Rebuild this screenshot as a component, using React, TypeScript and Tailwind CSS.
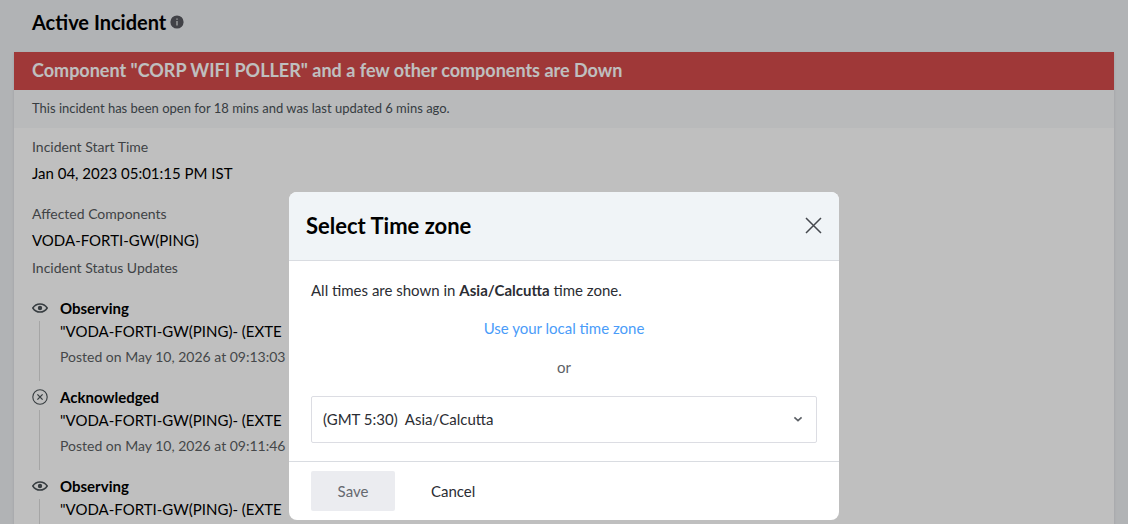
import React from "react";

type Update = { kind: "observing" | "acknowledged"; title: string; time: string };

const updates: Update[] = [
  { kind: "observing", title: "Observing", time: "09:13:03" },
  { kind: "acknowledged", title: "Acknowledged", time: "09:11:46" },
  { kind: "observing", title: "Observing", time: "09:10:02" },
];

function InfoIcon() {
  return (
    <svg viewBox="0 0 14 14" className="size-[14px]" aria-hidden="true">
      <circle cx="7" cy="7" r="6.6" fill="#57595f" />
      <path d="M6.200 3.400h1.600v1.400H6.200zM6.200 6h1.600v4.600H6.200z" fill="#c4c6c8" />
    </svg>
  );
}

function EyeIcon() {
  return (
    <svg viewBox="0 0 16 16" className="size-4" fill="none" aria-hidden="true">
      <path d="M.8 8C2.600 5.200 5 3.900 8 3.900S13.400 5.200 15.200 8C13.400 10.800 11 12.100 8 12.100S2.600 10.800.8 8Z" stroke="#4a5257" strokeWidth="1.500" />
      <circle cx="8" cy="8" r="2.200" fill="#4a5257" />
    </svg>
  );
}

function CircleCrossIcon() {
  return (
    <svg viewBox="0 0 16 16" className="size-4" fill="none" stroke="#4a5257" aria-hidden="true">
      <circle cx="8" cy="8" r="7.2" strokeWidth="1.100" />
      <path d="m5.400 5.400 5.200 5.200m0-5.200-5.200 5.200" strokeWidth="1.300" />
    </svg>
  );
}

function UpdateItem({ update }: { update: Update }) {
  return (
    <li className="flex gap-3">
      <div className="flex w-4 flex-col items-start pt-1">
        {update.kind === "observing" ? <EyeIcon /> : <CircleCrossIcon />}
        <div className="mt-[5px] mb-1 ml-[7px] w-px flex-1 bg-[#dcdcdc]" />
      </div>
      <div className="pb-[18px] text-black">
        <h3 className="text-[15px] leading-6 font-bold">{update.title}</h3>
        <p className="text-[15px] leading-[22px]">"VODA-FORTI-GW(PING)- (EXTE</p>
        <p className="mt-[5px] text-sm leading-5 text-[#5c5f63]">Posted on May 10, 2026 at {update.time}</p>
      </div>
    </li>
  );
}

function TimeZoneDialog() {
  return (
    <div className="fixed inset-0 flex items-start justify-center bg-black/25 pt-48">
      <div role="dialog" aria-modal="true" aria-labelledby="tz-title" className="w-full max-w-[550px] overflow-hidden rounded-lg bg-white text-[#2b2d33]">
        <header className="flex items-center justify-between border-b border-[#d9dce1] bg-[#f0f4f7] px-[17px] py-4">
          <h2 id="tz-title" className="text-[22px] leading-9 font-bold text-black">Select Time zone</h2>
          <button type="button" aria-label="Close" className="pb-[2px]">
            <svg viewBox="0 0 17 17" className="size-[17px]" stroke="#45484e" strokeWidth="1.500" aria-hidden="true">
              <path d="m1 1 15 15M16 1 1 16" />
            </svg>
          </button>
        </header>
        <div className="px-[22px] pt-[17px] pb-[18px] text-[15px] leading-6">
          <p>
            All times are shown in <strong className="font-bold">Asia/Calcutta</strong> time zone.
          </p>
          <p className="mt-[14px] text-center">
            <a href="#local" className="text-[#4a9cf9]">Use your local time zone</a>
          </p>
          <p className="mt-[15px] text-center text-[#5c5f66]">or</p>
          <div className="relative mt-[17px]">
            <select aria-label="Time zone" defaultValue="calcutta" className="block h-[47px] w-full appearance-none rounded-xs border border-[#dcdde3] bg-white px-[11px] pb-[2px]">
              <option value="calcutta">{"(GMT 5:30)\u00a0 Asia/Calcutta"}</option>
            </select>
            <svg viewBox="0 0 10 10" className="pointer-events-none absolute top-[18px] right-[14px] size-[10px]" fill="none" stroke="#5c6066" strokeWidth="1.600" aria-hidden="true">
              <path d="m1.400 3.300 3.600 3.400 3.600-3.400" />
            </svg>
          </div>
        </div>
        <footer className="flex gap-[10px] border-t border-[#d9dce1] px-[22px] py-[9px] text-[15px]">
          <button type="button" disabled className="h-10 w-[84px] rounded-xs bg-[#ebecf0] text-[#66696f]">Save</button>
          <button type="button" className="h-10 px-[26px]">Cancel</button>
        </footer>
      </div>
    </div>
  );
}

export default function App() {
  return (
    <div className="h-screen overflow-hidden bg-[#edeff2] font-['Lato',sans-serif]">
      <main className="px-[14px]">
        <div className="flex h-[52px] items-start gap-1 px-[18px] pt-2">
          <h1 className="text-xl leading-7 font-bold text-black">Active Incident</h1>
          <button type="button" aria-label="About active incidents" className="flex h-[27px] items-center">
            <InfoIcon />
          </button>
        </div>
        <article className="bg-white shadow-sm">
          <h2 className="bg-[#d44b4b] px-[18px] pt-[7px] pb-[9px] text-lg leading-[22px] font-bold text-white">
            Component "CORP WIFI POLLER" and a few other components are Down
          </h2>
          <p className="bg-[#f7f8fa] px-[18px] pt-[7px] pb-[9px] text-[13px] leading-[22px] text-[#4a5257]">
            This incident has been open for 18 mins and was last updated 6 mins ago.
          </p>
          <div className="px-[18px] pt-[7px] pb-6">
            <dl className="text-[15px] leading-6 text-black">
              <dt className="text-sm leading-6 text-[#55595d]">Incident Start Time</dt>
              <dd className="mt-[2px]">Jan 04, 2023 05:01:15 PM IST</dd>
              <dt className="mt-[17px] text-sm leading-6 text-[#55595d]">Affected Components</dt>
              <dd className="mt-[2px]">VODA-FORTI-GW(PING)</dd>
            </dl>
            <h3 className="mt-1 text-sm leading-6 text-[#55595d]">Incident Status Updates</h3>
            <ul className="mt-4">
              {updates.map((u) => (
                <UpdateItem key={u.time} update={u} />
              ))}
            </ul>
          </div>
        </article>
      </main>
      <TimeZoneDialog />
    </div>
  );
}
